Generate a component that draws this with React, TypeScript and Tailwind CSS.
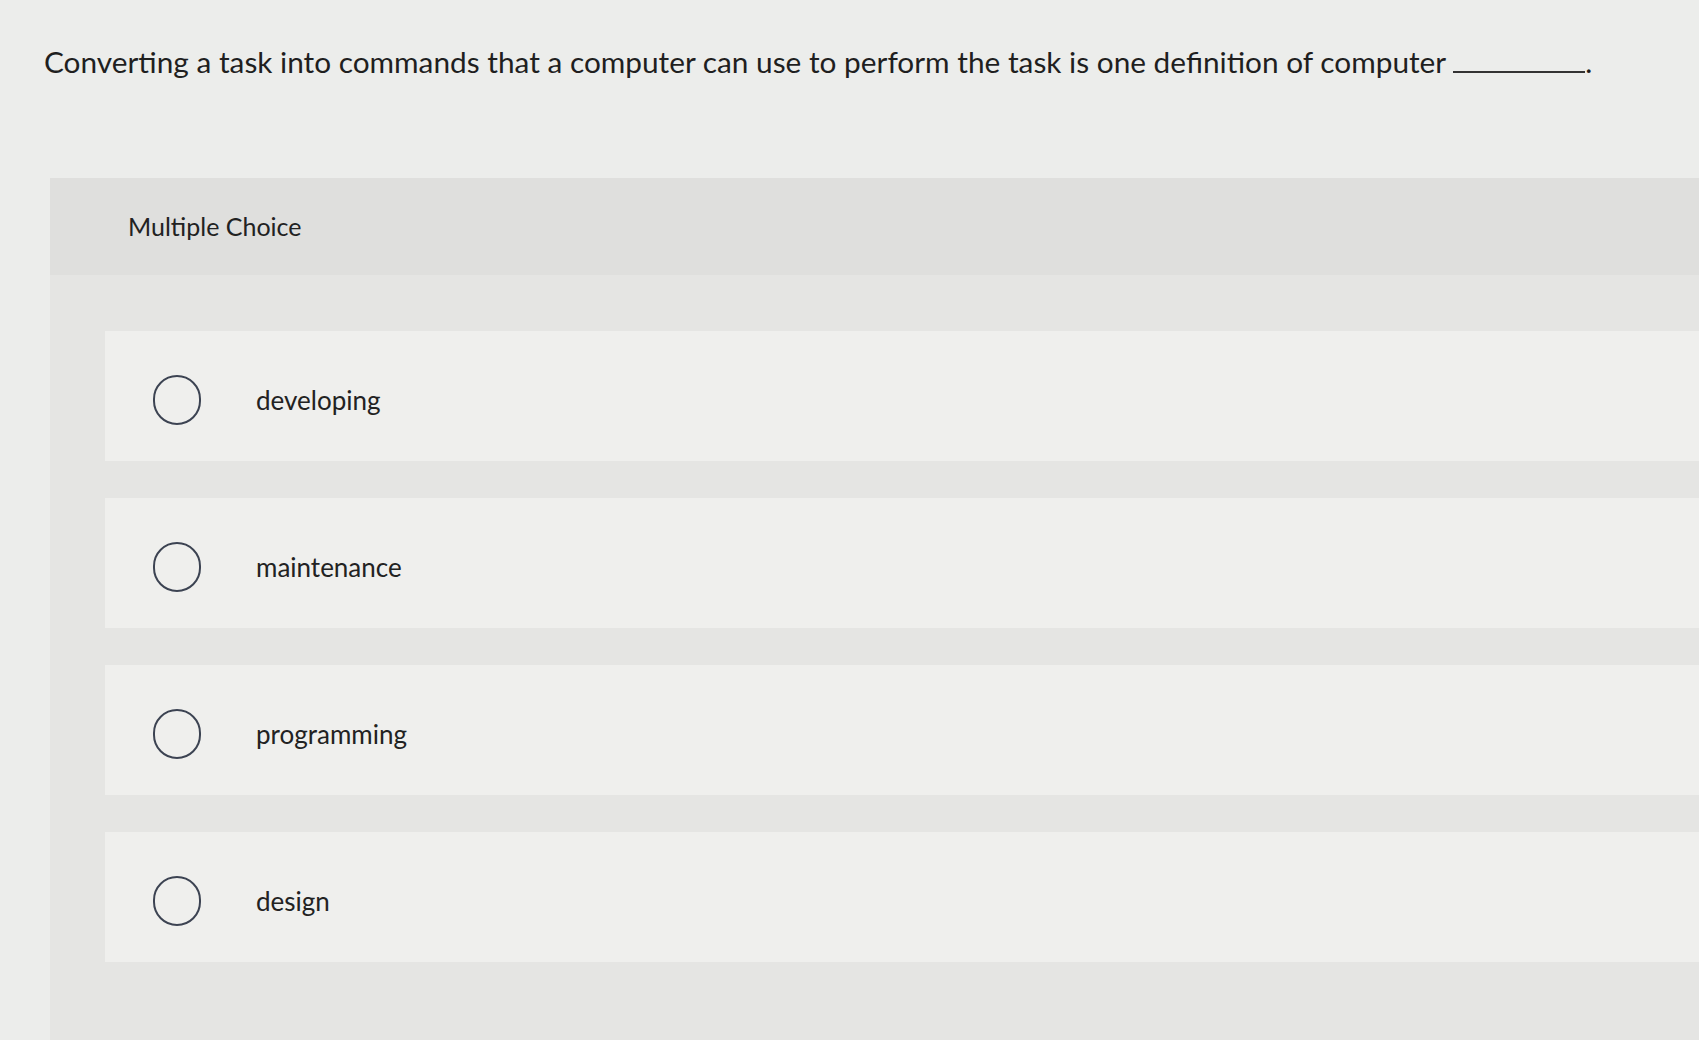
const options = ["developing", "maintenance", "programming", "design"];

function Option({ label }: { label: string }) {
  return (
    <label className="flex h-[130px] cursor-pointer items-center bg-[#efefed] pl-[48px] pt-[8px]">
      <span className="block h-[50px] w-[48px] shrink-0 rounded-full border-2 border-[#3c4352]" />
      <span className="ml-[55px] text-[26px] text-[#222]">{label}</span>
    </label>
  );
}

export default function App() {
  return (
    <div className="min-h-screen overflow-hidden bg-[#ecedeb] font-['Lato',sans-serif]">
      <p className="pl-[44px] pt-[42px] text-[29.8px] leading-[40px] text-[#1f1f1f]">
        Converting a task into commands that a computer can use to perform the task is one definition of computer{" "}
        <span className="inline-block w-[132px] border-b-2 border-[#333]" />.
      </p>

      <div className="ml-[50px] mt-[96px] bg-[#e5e5e3] pb-[120px]">
        <div className="flex h-[97px] items-center bg-[#dfdfdd] pl-[78px]">
          <h2 className="text-[25px] text-[#222]">Multiple Choice</h2>
        </div>
        <div className="flex flex-col gap-[37px] pl-[55px] pt-[56px]">
          {options.map((o) => (
            <Option key={o} label={o} />
          ))}
        </div>
      </div>
    </div>
  );
}
